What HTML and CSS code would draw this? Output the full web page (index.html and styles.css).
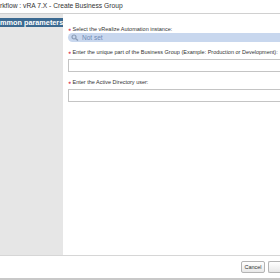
FILE: index.html
```html
<!DOCTYPE html>
<html lang="en">
<head>
    <meta charset="UTF-8">
    <link rel="stylesheet" href="styles.css">
    <title>Create Business Group</title>
</head>
<body>
    <div class="dialog">
        <div class="title">rkflow : vRA 7.X - Create Business Group</div>
        <div class="main">
            <div class="sidebar">
                <div class="step">mmon parameters</div>
            </div>
            <div class="content">
                <div class="field">
                    <label><span class="req">&#9679;</span> Select the vRealize Automation instance:</label>
                    <div class="picker">
                        <svg width="9" height="7" viewBox="0 0 9 7"><circle cx="3" cy="3" r="2" fill="none" stroke="#8a9bb5" stroke-width="1.2"/><line x1="4.5" y1="4.5" x2="7" y2="6.5" stroke="#8a9bb5" stroke-width="1.4"/></svg>
                        <span>Not set</span>
                    </div>
                </div>
                <div class="field">
                    <label><span class="req">&#9679;</span> Enter the unique part of the Business Group (Example: Production or Development):</label>
                    <input type="text">
                </div>
                <div class="field">
                    <label><span class="req">&#9679;</span> Enter the Active Directory user:</label>
                    <input type="text">
                </div>
            </div>
        </div>
        <div class="footer">
            <button>Cancel</button>
            <button class="next"></button>
        </div>
    </div>
</body>
</html>
```

FILE: styles.css
```css
body {
    margin: 0;
    background: #ffffff;
    font-family: "Liberation Sans", Arial, sans-serif;
    overflow: hidden;
}

.dialog {
    width: 280px;
    height: 280px;
    display: flex;
    flex-direction: column;
    border-bottom: 2px solid #c8c8c8;
    box-sizing: border-box;
}

.title {
    height: 14px;
    line-height: 11px;
    font-size: 6.7px;
    color: #333333;
    white-space: nowrap;
    border-bottom: 1px solid #d0d0d0;
    box-sizing: border-box;
}

.main {
    flex: 1;
    display: flex;
    border-bottom: 1px solid #d6d6d6;
}

.sidebar {
    width: 63px;
    background: #e6e6e6;
    padding-top: 4px;
}

.step {
    height: 9px;
    line-height: 9px;
    background: #3c6a91;
    color: #ffffff;
    font-size: 7.3px;
    font-weight: bold;
    white-space: nowrap;
    overflow: hidden;
}

.content {
    flex: 1;
    padding: 11px 0 0 5px;
    min-width: 0;
}

.field {
    margin-bottom: 6px;
}

.field label {
    display: block;
    font-size: 5.5px;
    color: #333333;
    white-space: nowrap;
    height: 8px;
    line-height: 8px;
}

.req {
    color: #e0506a;
    font-size: 5px;
}

.picker {
    height: 9px;
    background: #c8d7ee;
    border-radius: 5px 0 0 5px;
    display: flex;
    align-items: center;
    gap: 2px;
    padding-left: 3px;
    font-size: 6.5px;
    color: #6f8ab5;
}

.field input {
    display: block;
    width: 100%;
    height: 13px;
    margin: 3px 0 1px;
    border: 1px solid #c4c4c4;
    border-right: 0;
    box-sizing: border-box;
    background: #ffffff;
}

.footer {
    height: 22px;
    display: flex;
    justify-content: flex-end;
    align-items: center;
    gap: 3px;
}

.footer button {
    height: 12px;
    width: 24px;
    padding: 0;
    font-family: "Liberation Sans", Arial, sans-serif;
    font-size: 5.5px;
    color: #333333;
    background: linear-gradient(#ffffff, #e8e8e8);
    border: 1px solid #b4b4b4;
    border-radius: 2px;
}

.footer .next {
    width: 12px;
    border-right: 0;
    border-radius: 2px 0 0 2px;
}
```
